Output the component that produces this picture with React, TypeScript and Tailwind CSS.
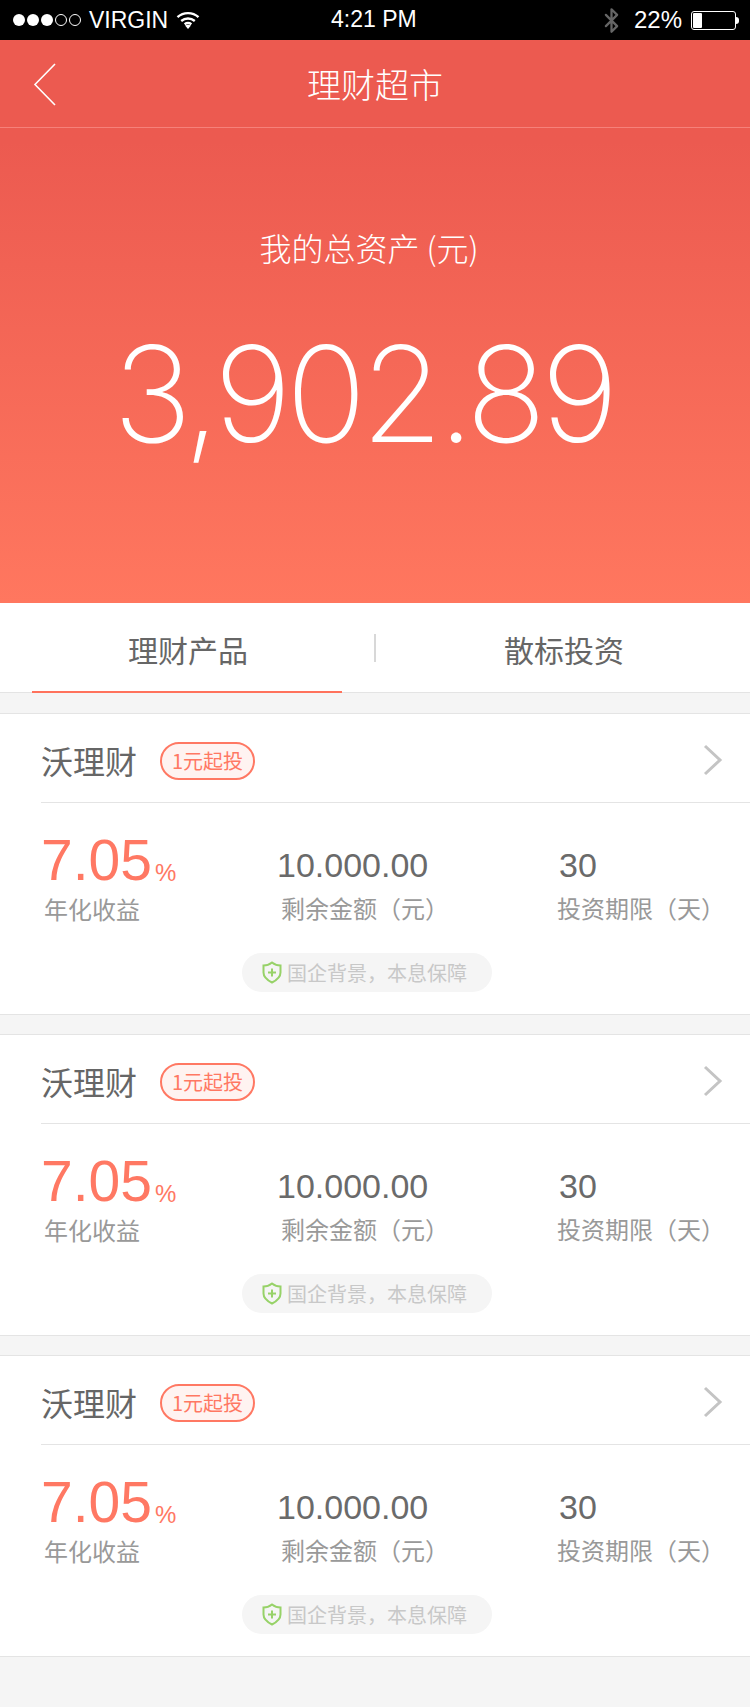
import { Bluetooth } from "lucide-react";

const cjk = "font-['Noto_Sans_CJK_SC','Noto_Sans',sans-serif]";
const num = "font-['Liberation_Sans',sans-serif]";

function Wifi() {
  return (
    <svg width="24" height="18" viewBox="0 0 24 18" fill="none" stroke="white" strokeWidth="2.4">
      <path d="M1.5 6.2C7.5 .8 16.5 .8 22.5 6.2" />
      <path d="M5.2 10C9.2 6.6 14.8 6.6 18.8 10" />
      <path d="M8.6 13.2C10.8 11.6 13.2 11.6 15.4 13.2" />
      <path d="M12 18l-3-3.4c2-1.2 4-1.2 6 0z" fill="white" stroke="none" />
    </svg>
  );
}

function StatusBar() {
  return (
    <div className="flex h-10 items-center bg-black pl-[13px] pr-[11px] font-['Liberation_Sans',sans-serif] text-[24px] font-light text-white">
      <div className="flex flex-1 items-center">
        <div className="flex gap-[2px]">
          <span className="h-3 w-3 rounded-full bg-white" />
          <span className="h-3 w-3 rounded-full bg-white" />
          <span className="h-3 w-3 rounded-full bg-white" />
          <span className="h-3 w-3 rounded-full border border-white" />
          <span className="h-3 w-3 rounded-full border border-white" />
        </div>
        <span className="ml-2 text-[23px]">VIRGIN</span>
        <span className="ml-2">
          <Wifi />
        </span>
      </div>
      <span className="absolute left-[331px] top-[2px] text-[23px]">4:21 PM</span>
      <div className="flex items-center">
        <Bluetooth className="h-[27px] w-[27px] text-[#666]" strokeWidth={2} />
        <span className="ml-[9px]">22%</span>
        <div className="ml-[9px] flex h-[19px] w-[45px] items-center rounded-[3px] border border-white p-[1px]">
          <div className="h-full w-[9px] rounded-[1px] bg-white" />
        </div>
        <div className="h-[7px] w-[3px] rounded-r-sm bg-white" />
      </div>
    </div>
  );
}

function Hero() {
  return (
    <div className="h-[563px] bg-gradient-to-b from-[#ec5a50] from-[18%] to-[#ff775f] text-white">
      <div className="flex h-[88px] items-center justify-center border-b border-[#f6817a]">
        <svg className="absolute left-[33px] top-[63px]" width="24" height="43" viewBox="0 0 24 43" fill="none" stroke="white" strokeWidth="1.6">
          <path d="M22 1L2 21.5 22 42" />
        </svg>
        <span className={`${cjk} text-[34px] font-light`}>理财超市</span>
      </div>
      <div className={`${cjk} mt-[97px] pr-[12px] text-center text-[32px] leading-[44px] font-light`}>我的总资产 (元)</div>
      <div className="mt-[45px] pr-[24px] text-center font-['Inter',sans-serif] text-[133px] leading-[160px] font-extralight tracking-[-5.4px]">3,902.89</div>
    </div>
  );
}

function Tabs() {
  return (
    <div className={`${cjk} flex h-[90px] border-b border-[#e4e4e4] bg-white text-[30px] text-[#666]`}>
      <div className="ml-8 flex h-[90px] w-[310px] items-center justify-center border-b-2 border-[#ff725c] pl-[2px] pt-1">理财产品</div>
      <div className="ml-[32px] mt-[31px] h-7 w-[2px] bg-[#d8d8d8]" />
      <div className="flex flex-1 items-center justify-center pl-[2px] pt-1">散标投资</div>
    </div>
  );
}

function Card() {
  return (
    <div className="border-y border-[#e4e4e4] bg-white">
      <div className="ml-[41px] flex h-[89px] items-center border-b border-[#e4e4e4] pr-[27px] pt-1">
        <span className={`${cjk} text-[32px] text-[#666]`}>沃理财</span>
        <span className={`${cjk} ml-[23px] mt-[2px] flex h-[38px] w-[95px] items-center justify-center rounded-full border-2 border-[#ff7863] bg-[#fff3f1] text-[20px] text-[#ff7863]`}>1元起投</span>
        <svg className="ml-auto" width="20" height="32" viewBox="0 0 20 32" fill="none" stroke="#c4c4c4" strokeWidth="3">
          <path d="M2 2l15 14L2 30" />
        </svg>
      </div>
      <div className="flex h-[121px] pl-[41px]">
        <div className="w-[236px]">
          <div className={`${num} mt-[33px] flex h-[52px] items-end text-[#ff7863]`}>
            <span className="text-[57px] leading-[56px]">7.05</span>
            <span className="mb-[3px] ml-[3px] text-[24px] leading-[24px] font-light">%</span>
          </div>
          <div className={`${cjk} mt-[4px] pl-[3px] text-[24px] leading-[34px] text-[#999]`}>年化收益</div>
        </div>
        <div className="w-[281px]">
          <div className={`${num} mt-[39px] text-[34px] leading-[46px] text-[#6a6a6a]`}>10.000.00</div>
          <div className={`${cjk} mt-[3px] pl-[4px] text-[24px] leading-[34px] text-[#999]`}>剩余金额（元）</div>
        </div>
        <div>
          <div className={`${num} mt-[39px] pl-[1px] text-[34px] leading-[46px] text-[#6a6a6a]`}>30</div>
          <div className={`${cjk} mt-[3px] -ml-[1px] text-[24px] leading-[34px] whitespace-nowrap text-[#999]`}>投资期限（天）</div>
        </div>
      </div>
      <div className="flex h-[90px] pl-[242px] pt-[29px]">
        <div className="flex h-[39px] w-[250px] items-center rounded-full bg-[#f5f5f5] pl-[20px]">
          <svg width="20" height="23" viewBox="0 0 20 23" fill="none" stroke="#97d268" strokeWidth="2">
            <path d="M10 1.500c2.500 2 5 3 8.500 3v7c0 4-3.500 7.500-8.500 10-5-2.500-8.500-6-8.500-10v-7c3.500 0 6-1 8.500-3z" />
            <path d="M10 7.500v8M6 11.500h8" />
          </svg>
          <span className={`${cjk} ml-[5px] text-[20px] text-[#c8c8c8]`}>国企背景，本息保障</span>
        </div>
      </div>
    </div>
  );
}

export default function App() {
  return (
    <div className="relative h-[1707px] w-[750px] overflow-hidden bg-[#f5f5f5]">
      <StatusBar />
      <Hero />
      <Tabs />
      <div className="flex flex-col gap-[19px] pt-5">
        <Card />
        <Card />
        <Card />
      </div>
    </div>
  );
}
